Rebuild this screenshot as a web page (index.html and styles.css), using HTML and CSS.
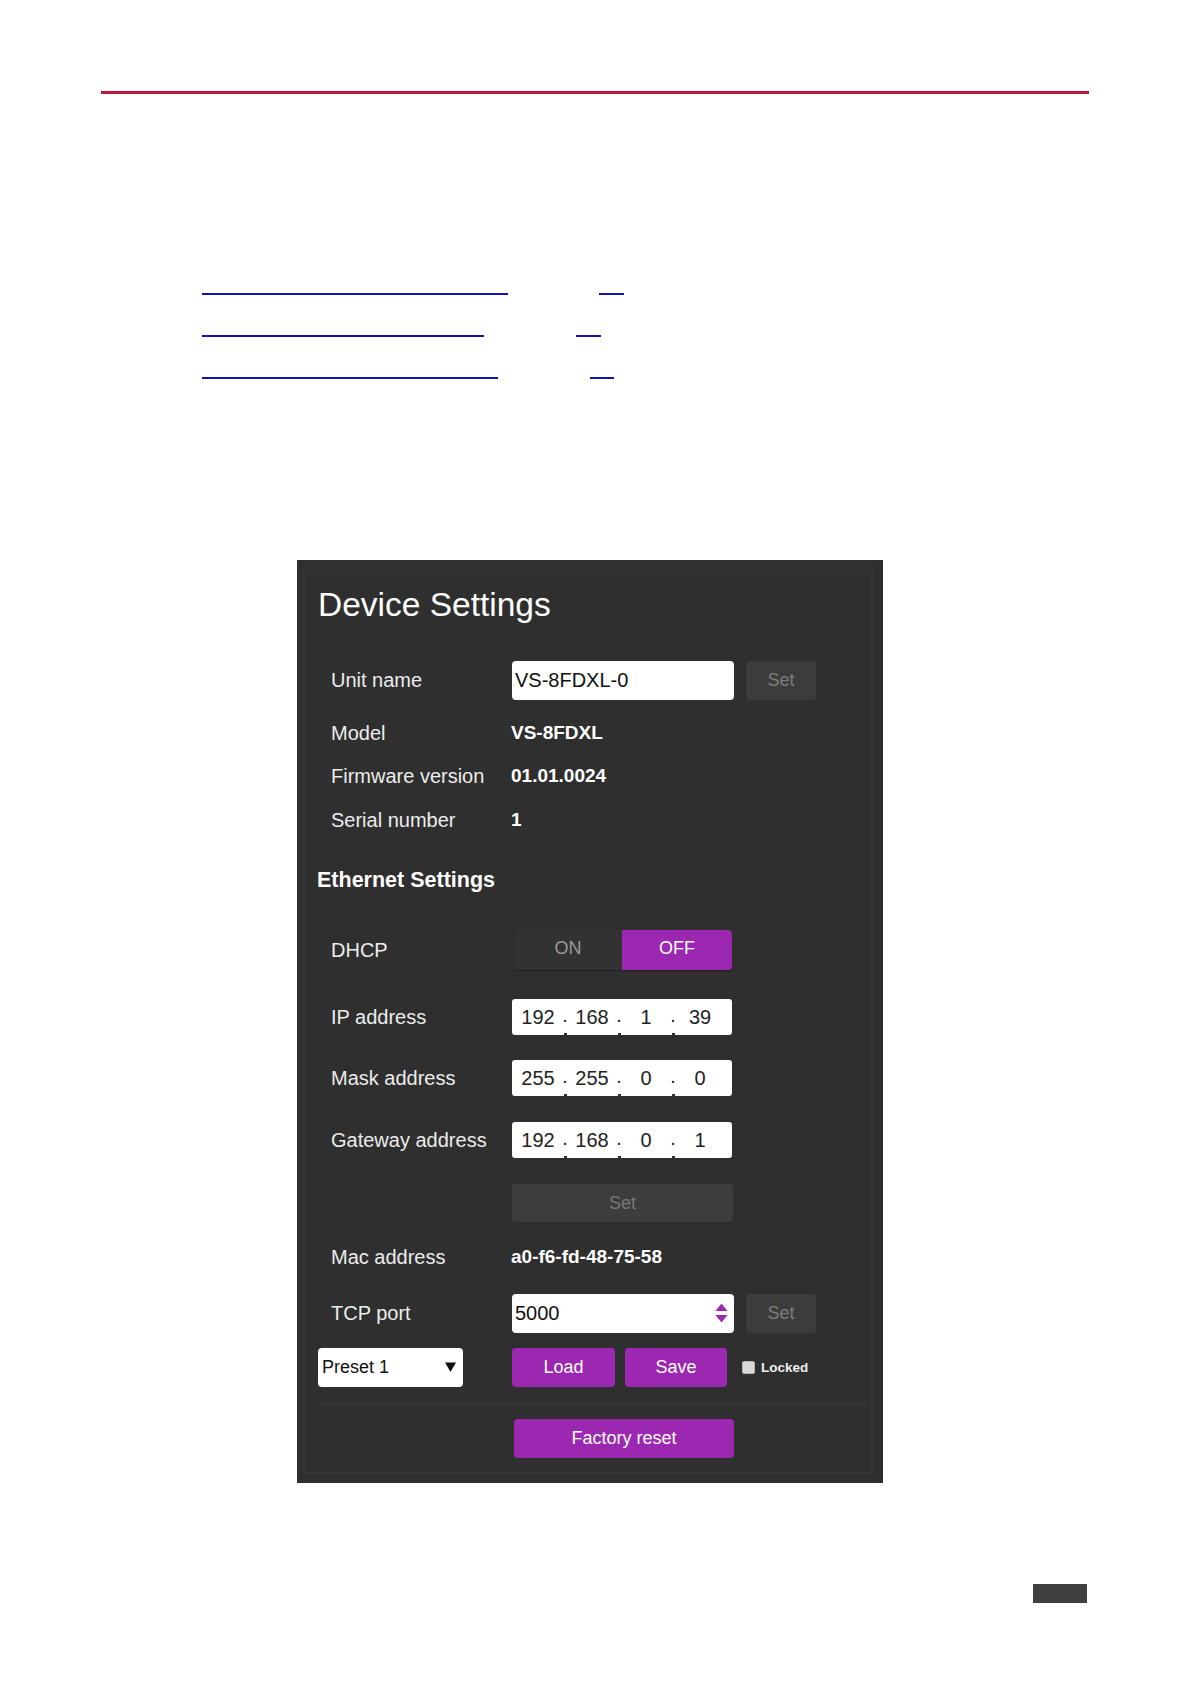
FILE: index.html
```html
<!DOCTYPE html>
<html lang="en">
<head>
<meta charset="utf-8">
<title>Device Settings</title>
<link rel="stylesheet" href="styles.css">
</head>
<body>
<div class="page">
  <div class="rule"></div>

  <div class="toc">
    <div class="toc-row"><span class="toc-link l1"></span><span class="toc-page p1"></span></div>
    <div class="toc-row"><span class="toc-link l2"></span><span class="toc-page p2"></span></div>
    <div class="toc-row"><span class="toc-link l3"></span><span class="toc-page p3"></span></div>
  </div>

  <div class="panel">
    <div class="inner">
      <h1 class="title">Device Settings</h1>

      <div class="row r-unit">
        <div class="label">Unit name</div>
        <div class="input">VS-8FDXL-0</div>
        <div class="btn btn-set">Set</div>
      </div>

      <div class="row r-model">
        <div class="label">Model</div>
        <div class="value">VS-8FDXL</div>
      </div>

      <div class="row r-fw">
        <div class="label">Firmware version</div>
        <div class="value">01.01.0024</div>
      </div>

      <div class="row r-serial">
        <div class="label">Serial number</div>
        <div class="value">1</div>
      </div>

      <div class="row r-eth">
        <div class="heading">Ethernet Settings</div>
      </div>

      <div class="row r-dhcp">
        <div class="label">DHCP</div>
        <div class="toggle">
          <div class="tg on">ON</div>
          <div class="tg off">OFF</div>
        </div>
      </div>

      <div class="row r-ip">
        <div class="label">IP address</div>
        <div class="ip">
          <span class="seg">192</span><span class="dot">.</span><span class="seg">168</span><span class="dot">.</span><span class="seg">1</span><span class="dot">.</span><span class="seg">39</span>
        </div>
      </div>

      <div class="row r-mask">
        <div class="label">Mask address</div>
        <div class="ip">
          <span class="seg">255</span><span class="dot">.</span><span class="seg">255</span><span class="dot">.</span><span class="seg">0</span><span class="dot">.</span><span class="seg">0</span>
        </div>
      </div>

      <div class="row r-gw">
        <div class="label">Gateway address</div>
        <div class="ip">
          <span class="seg">192</span><span class="dot">.</span><span class="seg">168</span><span class="dot">.</span><span class="seg">0</span><span class="dot">.</span><span class="seg">1</span>
        </div>
      </div>

      <div class="row r-set">
        <div class="btn btn-wide">Set</div>
      </div>

      <div class="row r-mac">
        <div class="label">Mac address</div>
        <div class="value">a0-f6-fd-48-75-58</div>
      </div>

      <div class="row r-tcp">
        <div class="label">TCP port</div>
        <div class="input input-num">
          <span>5000</span>
          <svg class="spin" width="13" height="22" viewBox="0 0 13 22" aria-hidden="true">
            <polygon points="0.5,9 6.5,1.5 12.5,9" fill="#9c27b0"/>
            <polygon points="0.5,13 6.5,20.5 12.5,13" fill="#9c27b0"/>
          </svg>
        </div>
        <div class="btn btn-set">Set</div>
      </div>

      <div class="row r-preset">
        <div class="select-cell">
          <div class="select">
            <span>Preset 1</span>
            <svg width="11" height="10" viewBox="0 0 11 10" aria-hidden="true">
              <polygon points="0,0.5 11,0.5 5.5,10" fill="#111"/>
            </svg>
          </div>
        </div>
        <div class="btn btn-purple load">Load</div>
        <div class="btn btn-purple save">Save</div>
        <div class="locked"><span class="check"></span><span>Locked</span></div>
      </div>

      <div class="sep"></div>

      <div class="row r-factory">
        <div class="btn btn-purple factory">Factory reset</div>
      </div>
    </div>
  </div>

  <div class="folio"></div>
</div>
</body>
</html>
```

FILE: styles.css
```css
* { box-sizing: border-box; }

html, body {
  margin: 0;
  padding: 0;
  background: #ffffff;
}

body {
  font-family: "Liberation Sans", Arial, sans-serif;
}

.page {
  width: 1191px;
  height: 1684px;
  overflow: hidden;
  display: flex;
  flex-direction: column;
  align-items: flex-start;
}

/* top rule */
.rule {
  margin: 91px 0 0 101px;
  width: 988px;
  height: 3px;
  background: #c0163e;
}

/* link underlines */
.toc {
  margin: 199px 0 0 202px;
  display: flex;
  flex-direction: column;
  gap: 40px;
}
.toc-row { display: flex; }
.toc-link, .toc-page {
  height: 2px;
  background: #1414a8;
}
.l1 { width: 306px; }
.p1 { margin-left: 91px; width: 25px; }
.l2 { width: 282px; }
.p2 { margin-left: 92px; width: 25px; }
.l3 { width: 296px; }
.p3 { margin-left: 92px; width: 24px; }

/* panel */
.panel {
  margin: 181px 0 0 297px;
  width: 586px;
  height: 923px;
  background: #2f2f2f;
  padding: 7px 10px 9px 6px;
}
.inner {
  height: 100%;
  border: 2px solid #353535;
  padding: 16px 3px 0 13px;
  display: flex;
  flex-direction: column;
  color: #ececec;
}

.title {
  margin: 0;
  height: 40px;
  font-size: 33.5px;
  line-height: 40px;
  font-weight: normal;
  color: #ffffff;
}

.row {
  display: flex;
  align-items: center;
  height: 40px;
  flex: none;
}

.r-unit { margin-top: 35px; }
.r-model { margin-top: 13px; }
.r-fw { margin-top: 3px; }
.r-serial { margin-top: 4px; }
.r-eth { margin-top: 20px; }
.r-dhcp { margin-top: 30px; }
.r-ip { margin-top: 27px; }
.r-mask { margin-top: 21px; }
.r-gw { margin-top: 22px; }
.r-set { margin-top: 23px; }
.r-mac { margin-top: 14px; }
.r-tcp { margin-top: 16px; }
.r-preset { margin-top: 14px; }
.r-factory { margin-top: 14px; }

.label {
  flex: none;
  width: 194px;
  padding-left: 13px;
  font-size: 20px;
  color: #ececec;
  white-space: nowrap;
}

.value {
  margin-left: -1px;
  font-size: 19px;
  font-weight: bold;
  color: #ffffff;
}

.heading {
  margin-left: -1px;
  font-size: 21.5px;
  font-weight: bold;
  color: #ffffff;
}

/* inputs */
.input {
  flex: none;
  width: 222px;
  height: 39px;
  background: #ffffff;
  border-radius: 4px;
  display: flex;
  align-items: center;
  padding-left: 3px;
  font-size: 20px;
  color: #111111;
}
.input-num {
  justify-content: space-between;
  padding-right: 6px;
}
.spin { display: block; }

.btn {
  flex: none;
  display: flex;
  align-items: center;
  justify-content: center;
  border-radius: 4px;
  font-size: 18px;
}
.btn-set {
  margin-left: 12px;
  width: 70px;
  height: 39px;
  background: #3c3c3c;
  color: #7c7c7c;
}
.btn-wide {
  margin-left: 194px;
  width: 221px;
  height: 38px;
  background: #3d3d3d;
  color: #777777;
}
.btn-purple {
  height: 39px;
  background: #9c27b0;
  color: #ffffff;
}

/* toggle */
.toggle {
  flex: none;
  margin-left: 2px;
  width: 218px;
  height: 40px;
  display: flex;
  border-radius: 4px;
  overflow: hidden;
  box-shadow: 0 1px 1px rgba(0, 0, 0, 0.35);
}
.tg {
  display: flex;
  align-items: center;
  justify-content: center;
  font-size: 18px;
  padding-bottom: 3px;
}
.tg.on {
  width: 108px;
  background: #323232;
  color: #9a9a9a;
}
.tg.off {
  flex: 1;
  background: #9c27b0;
  color: #ffffff;
}

/* ip boxes */
.ip {
  flex: none;
  width: 220px;
  height: 36px;
  background: #ffffff;
  border-radius: 3px;
  display: flex;
  padding-left: 3px;
  font-size: 20px;
  color: #222222;
}
.seg {
  width: 46px;
  display: flex;
  align-items: center;
  justify-content: center;
}
.dot {
  width: 8px;
  display: flex;
  align-items: center;
  justify-content: center;
  padding-bottom: 4px;
  background: #ffffff linear-gradient(#2f2f2f, #2f2f2f) no-repeat center bottom / 3px 2px;
}

/* preset row */
.select-cell {
  flex: none;
  width: 194px;
}
.select {
  width: 145px;
  height: 39px;
  background: #ffffff;
  border-radius: 4px;
  display: flex;
  align-items: center;
  justify-content: space-between;
  padding: 0 7px 0 4px;
  font-size: 18px;
  color: #111111;
}
.load { width: 103px; }
.save { width: 102px; margin-left: 10px; }
.locked {
  margin-left: 15px;
  display: flex;
  align-items: center;
  gap: 6px;
  font-size: 13.5px;
  font-weight: bold;
  color: #eeeeee;
}
.check {
  width: 13px;
  height: 13px;
  background: #d9d9d9;
  border: 1px solid #b5b5b5;
  border-radius: 2px;
}

.sep {
  flex: none;
  margin-top: 16px;
  width: 550px;
  height: 1px;
  background: #3b3b3b;
}

.factory {
  margin-left: 196px;
  width: 220px;
}

/* page number box */
.folio {
  margin: 101px 0 0 1033px;
  width: 54px;
  height: 19px;
  background: #404040;
}
```
